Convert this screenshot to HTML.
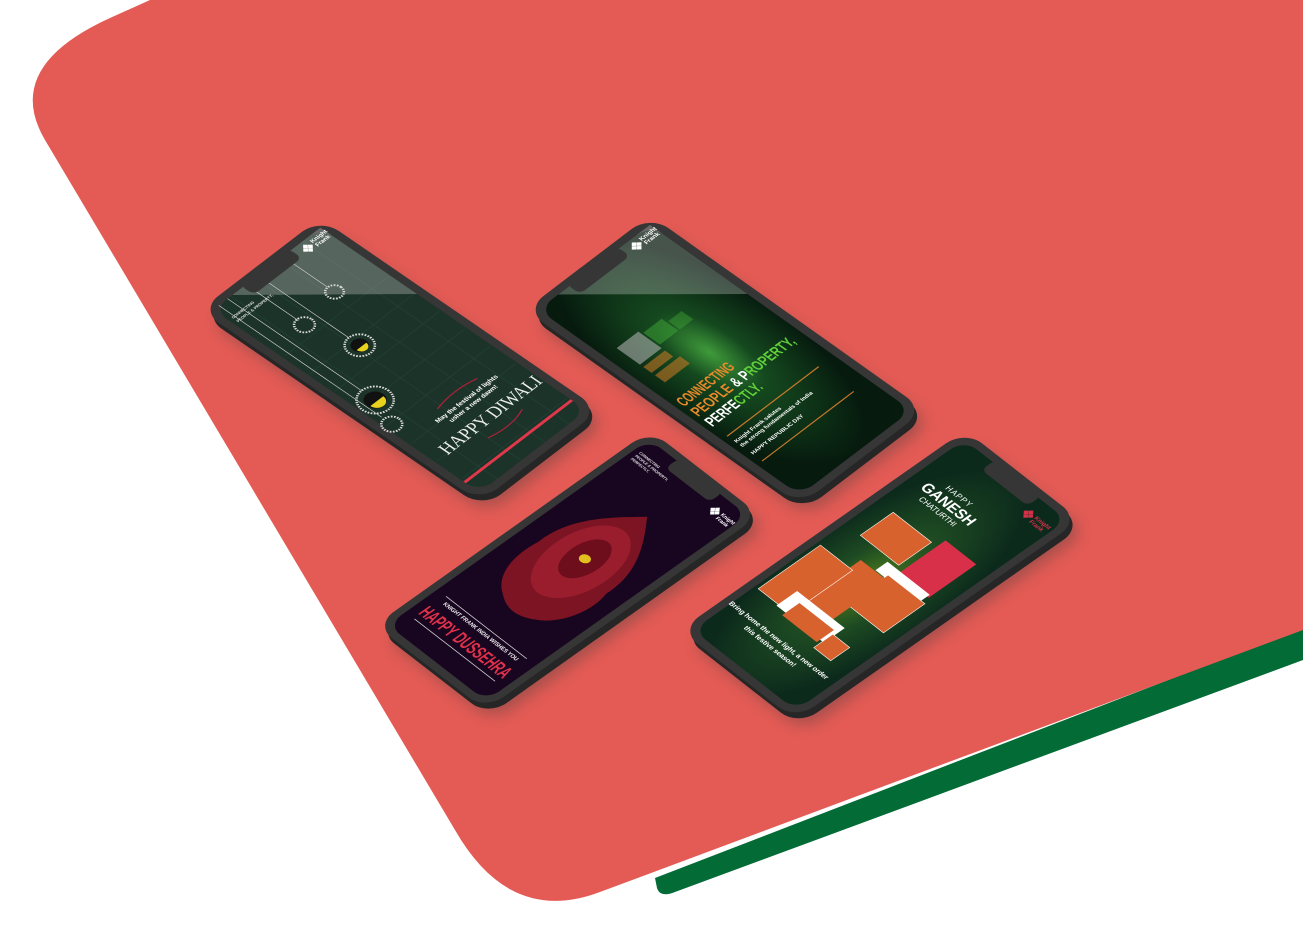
<!DOCTYPE html>
<html><head><meta charset="utf-8"><style>
html,body{margin:0;padding:0;background:#fff;width:1303px;height:929px;overflow:hidden}
svg{display:block}
text{font-family:"Liberation Sans",sans-serif}
.n{font-family:"Liberation Sans",sans-serif;font-weight:bold}
</style></head><body>
<svg width="1303" height="929" viewBox="0 0 1303 929" xmlns="http://www.w3.org/2000/svg">
<defs>
<filter id="sh" x="-20%" y="-20%" width="140%" height="140%"><feGaussianBlur stdDeviation="7"/></filter>
<radialGradient id="g2" cx="0.48" cy="0.45" r="0.55"><stop offset="0" stop-color="#3f9a3a"/><stop offset="0.35" stop-color="#15491f"/><stop offset="1" stop-color="#061a0e"/></radialGradient>
<radialGradient id="g4" cx="0.5" cy="0.55" r="0.55"><stop offset="0" stop-color="#4a7a1e"/><stop offset="0.45" stop-color="#1d4a22"/><stop offset="1" stop-color="#0c2a1c"/></radialGradient>
<g id="logo">
<rect x="3" y="0" width="4" height="4" transform="rotate(45 5 2)"/>
<rect x="0" y="3" width="4" height="4" transform="rotate(45 2 5)"/>
<rect x="6" y="3" width="4" height="4" transform="rotate(45 8 5)"/>
<rect x="3" y="6" width="4" height="4" transform="rotate(45 5 8)"/>
</g>
<g id="body">
<rect x="0" y="0" width="150" height="330" rx="22" fill="#3a3a3a"/>
</g>
</defs>

<path d="M1285,0 L1303,0 L1303,22 Z" fill="#036b35"/>
<path d="M655,878 L1303,628 L1303,660 L675,892 Q660,898 657,888 Z" fill="#036b35"/>
<path d="M150,0 L1303,0 L1303,630 L600,892 Q510,926 455,830 L45,140 Q2,67 110,18 Z" fill="#e45b55"/>

<g fill="#000" opacity="0.35" filter="url(#sh)">
<g transform="matrix(0.8,-0.613,0.848,0.582,208,322)"><use href="#body"/></g>
<g transform="matrix(0.833,-0.633,0.833,0.591,533,322)"><use href="#body"/></g>
<g transform="matrix(0.733,0.567,-0.833,0.591,658,442)"><use href="#body"/></g>
<g transform="matrix(0.767,0.6,-0.864,0.606,973,442)"><use href="#body"/></g>
</g>

<!-- PHONE 1 Diwali -->
<g transform="matrix(0.8,-0.613,0.848,0.582,203,316)"><rect width="150" height="330" rx="22" fill="#262626"/></g>
<g transform="matrix(0.8,-0.613,0.848,0.582,200,310)">
<rect width="150" height="330" rx="22" fill="#363636"/>
<rect x="8" y="8" width="134" height="314" rx="16" fill="#1c3329"/>
<g stroke="#24443a" stroke-width="0.8" fill="none" opacity="0.8">
<path d="M10,90 h130 M10,120 h130 M10,150 h130 M10,180 h130 M10,210 h130 M10,240 h130 M10,270 h130 M10,300 h130 M30,8 v314 M60,8 v314 M90,8 v314 M120,8 v314"/>
</g>
<g stroke="#cfcfcf" stroke-width="0.7"><path d="M26,8 V166 M64,8 V115 M49,8 V70 M95,8 V60 M15,8 V200"/></g>
<g fill="none" stroke="#d8d8d8" stroke-width="2.2">
<circle cx="26" cy="182" r="16" stroke-dasharray="1.5 1.2"/><circle cx="64" cy="128" r="13" stroke-dasharray="1.5 1.2"/>
<circle cx="49" cy="77" r="9" stroke-dasharray="1.5 1.2"/><circle cx="95" cy="69" r="8" stroke-dasharray="1.5 1.2"/>
<circle cx="15" cy="212" r="9" stroke-dasharray="1.5 1.2"/>
</g>
<circle cx="26" cy="182" r="10" fill="#111"/><path d="M18,184 a8,8 0 0 0 16,0 z" fill="#e8d21e"/>
<circle cx="64" cy="128" r="8" fill="#111"/><path d="M58,130 a6,6 0 0 0 12,0 z" fill="#e8d21e"/>
<text x="81" y="240" fill="#fff" font-size="6.5" font-weight="bold" text-anchor="middle">May the festival of lights</text>
<text x="81" y="248" fill="#fff" font-size="6.5" font-weight="bold" text-anchor="middle">usher a new dawn!</text>
<path d="M55,228 q25,-6 50,0 M60,283 q25,6 45,-2" stroke="#b0203a" stroke-width="1.2" fill="none"/>
<text x="81" y="272" fill="#eee" font-size="19" text-anchor="middle" style="font-family:'Liberation Serif',serif" textLength="120" lengthAdjust="spacingAndGlyphs">HAPPY DIWALI</text>
<rect x="8" y="303" width="134" height="3" fill="#e0384a"/>
<text x="12" y="28" fill="#ddd" font-size="4" font-weight="bold">CONNECTING</text>
<text x="12" y="34" fill="#ddd" font-size="4" font-weight="bold">PEOPLE &amp; PROPERTY,</text>
<polygon points="32,8 142,8 142,122" fill="#cfcfcf" opacity="0.32"/>
<rect x="45" y="5" width="60" height="16" rx="6" fill="#363636"/>
<g fill="#fff" transform="translate(112,12)"><use href="#logo"/></g>
<text x="124" y="16" fill="#fff" font-size="6" font-weight="bold">Knight</text>
<text x="124" y="22" fill="#fff" font-size="6" font-weight="bold">Frank</text>
</g>

<!-- PHONE 2 Republic -->
<g transform="matrix(0.833,-0.633,0.833,0.591,528,316)"><rect width="150" height="330" rx="22" fill="#262626"/></g>
<g transform="matrix(0.833,-0.633,0.833,0.591,525,310)">
<rect width="150" height="330" rx="22" fill="#363636"/>
<rect x="8" y="8" width="134" height="314" rx="16" fill="url(#g2)"/>
<g opacity="0.8">
<rect x="22" y="88" width="26" height="28" fill="#b8b8b8" opacity="0.7"/>
<rect x="50" y="92" width="22" height="20" fill="#3c9c34" opacity="0.7"/>
<rect x="74" y="98" width="16" height="14" fill="#3c9c34" opacity="0.6"/>
<rect x="22" y="120" width="26" height="10" fill="#d07a25" opacity="0.7"/>
<rect x="22" y="134" width="30" height="12" fill="#d07a25" opacity="0.7"/>
</g>
<text x="13" y="178" class="n" font-size="16" fill="#e8892a" textLength="62" lengthAdjust="spacingAndGlyphs">CONNECTING</text>
<text x="13" y="195" class="n" font-size="16" fill="#e8892a" textLength="118" lengthAdjust="spacingAndGlyphs">PEOPLE <tspan fill="#fff">&amp; P</tspan><tspan fill="#5fcf3a">ROPERTY,</tspan></text>
<text x="13" y="212" class="n" font-size="16" fill="#fff" textLength="62" lengthAdjust="spacingAndGlyphs">PERFE<tspan fill="#5fcf3a">CTLY.</tspan></text>
<rect x="14" y="228" width="110" height="1.2" fill="#c97a2a"/>
<text x="14" y="240" fill="#fff" font-size="5.5" font-weight="bold">Knight Frank salutes</text>
<text x="14" y="247" fill="#fff" font-size="5.5" font-weight="bold">the strong fundamentals of India</text>
<text x="14" y="260" fill="#fff" font-size="5.5" font-weight="bold">HAPPY REPUBLIC DAY</text>
<rect x="14" y="270" width="110" height="1.2" fill="#c97a2a"/>
<polygon points="32,8 142,8 142,125" fill="#cfcfcf" opacity="0.32"/>
<rect x="45" y="5" width="60" height="16" rx="6" fill="#363636"/>
<g fill="#fff" transform="translate(112,12)"><use href="#logo"/></g>
<text x="124" y="16" fill="#fff" font-size="6" font-weight="bold">Knight</text>
<text x="124" y="22" fill="#fff" font-size="6" font-weight="bold">Frank</text>
</g>

<!-- PHONE 3 Dussehra -->
<g transform="matrix(0.733,0.567,-0.833,0.591,653,436)"><rect width="150" height="330" rx="22" fill="#262626"/></g>
<g transform="matrix(0.733,0.567,-0.833,0.591,650,430)">
<rect width="150" height="330" rx="22" fill="#363636"/>
<rect x="8" y="8" width="134" height="314" rx="16" fill="#180520"/>
<rect x="45" y="5" width="60" height="16" rx="6" fill="#363636"/>
<text x="14" y="26" fill="#ddd" font-size="4" font-weight="bold">CONNECTING</text>
<text x="14" y="31" fill="#ddd" font-size="4" font-weight="bold">PEOPLE &amp; PROPERTY,</text>
<text x="14" y="36" fill="#ddd" font-size="4" font-weight="bold">PERFECTLY.</text>
<path d="M78,72 C95,90 125,120 122,160 C130,185 118,215 100,225 C85,235 70,235 55,225 C35,215 25,190 30,160 C28,120 55,95 78,72 Z" fill="#7d1424"/>
<ellipse cx="76" cy="150" rx="34" ry="52" fill="#9a1d2d"/>
<ellipse cx="76" cy="145" rx="18" ry="28" fill="#6e0e1d"/>
<ellipse cx="76" cy="145" rx="6" ry="5" fill="#e2c020"/>
<g fill="#fff" transform="translate(112,20)"><use href="#logo"/></g>
<text x="124" y="25" fill="#fff" font-size="5.5" font-weight="bold">Knight</text>
<text x="124" y="31" fill="#fff" font-size="5.5" font-weight="bold">Frank</text>
<rect x="20" y="262" width="110" height="0.8" fill="#ccc"/>
<text x="75" y="271" fill="#eee" font-size="6" text-anchor="middle" class="n" textLength="100" lengthAdjust="spacingAndGlyphs">KNIGHT FRANK INDIA WISHES YOU</text>
<text x="75" y="294" fill="#e0314b" font-size="20" text-anchor="middle" class="n" textLength="116" lengthAdjust="spacingAndGlyphs">HAPPY DUSSEHRA</text>
<rect x="20" y="300" width="110" height="0.8" fill="#ccc"/>
</g>

<!-- PHONE 4 Ganesh -->
<g transform="matrix(0.767,0.6,-0.864,0.606,968,436)"><rect width="150" height="330" rx="22" fill="#262626"/></g>
<g transform="matrix(0.767,0.6,-0.864,0.606,965,430)">
<rect width="150" height="330" rx="22" fill="#363636"/>
<rect x="8" y="8" width="134" height="314" rx="16" fill="url(#g4)"/>
<rect x="45" y="5" width="60" height="16" rx="6" fill="#363636"/>
<text x="55" y="58" fill="#fff" font-size="8" text-anchor="middle" letter-spacing="1">HAPPY</text>
<text x="55" y="73" fill="#fff" font-size="15" font-weight="bold" text-anchor="middle">GANESH</text>
<text x="55" y="83" fill="#fff" font-size="8" text-anchor="middle">CHATURTHI</text>
<g fill="#d9304a" transform="translate(108,22)"><use href="#logo"/></g>
<text x="120" y="27" fill="#d9304a" font-size="6" font-weight="bold">Knight</text>
<text x="120" y="33" fill="#d9304a" font-size="6" font-weight="bold">Frank</text>
<rect x="85" y="98" width="40" height="55" fill="#d9304a"/>
<rect x="28" y="108" width="50" height="38" fill="#d8622e" stroke="#fff" stroke-width="0.6"/>
<rect x="68" y="150" width="55" height="14" fill="#fff"/>
<rect x="80" y="160" width="48" height="48" fill="#d8622e" stroke="#fff" stroke-width="0.6"/>
<rect x="50" y="165" width="35" height="65" fill="#d8622e"/>
<rect x="12" y="178" width="42" height="72" fill="#d8622e" stroke="#fff" stroke-width="0.6"/>
<rect x="38" y="228" width="62" height="24" fill="#fff"/>
<rect x="50" y="236" width="45" height="20" fill="#d8622e"/>
<rect x="98" y="240" width="22" height="22" fill="#d8622e" stroke="#fff" stroke-width="0.6"/>
<text x="70" y="280" fill="#fff" font-size="7" font-weight="bold" text-anchor="middle">Bring home the new light, a new order</text>
<text x="70" y="290" fill="#fff" font-size="7" font-weight="bold" text-anchor="middle">this festive season!</text>
</g>
</svg>
</body></html>
